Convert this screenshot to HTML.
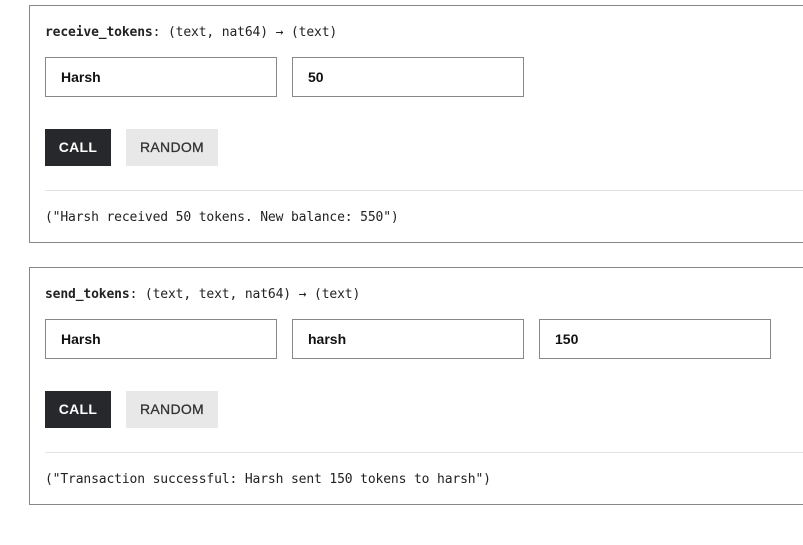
<!DOCTYPE html>
<html><head><style>
body{margin:0;background:#fff;width:803px;height:545px;overflow:hidden;position:relative;font-family:"Liberation Sans",sans-serif}
.card{position:absolute;left:29px;width:800px;border:1px solid #888;box-sizing:border-box;background:#fff}
.t{position:absolute;left:15px;font:13px "DejaVu Sans Mono",monospace;letter-spacing:-0.14px;color:#222;white-space:nowrap}
.t b{font-weight:bold}
.in{position:absolute;width:232px;height:40px;border:1px solid #888;box-sizing:border-box;font-size:14px;font-weight:bold;color:#111;line-height:38px;padding-left:15px}
.btn{position:absolute;height:37px;line-height:37px;text-align:center;font-size:14px;font-weight:bold;letter-spacing:.3px}
.call{background:#26282b;color:#fff;width:66px}
.rnd{background:#e8e8e8;color:#333;width:92px;font-weight:normal;-webkit-text-stroke:.3px #333}
.hr{position:absolute;left:15px;right:0;height:1px;background:#e2e2e2}
</style></head><body>
<div class="card" style="top:5px;height:238px">
<div class="t" style="top:19px"><b>receive_tokens</b>: (text, nat64) → (text)</div>
<div class="in" style="left:15px;top:51px">Harsh</div>
<div class="in" style="left:262px;top:51px">50</div>
<div class="btn call" style="left:15px;top:123px">CALL</div>
<div class="btn rnd" style="left:96px;top:123px">RANDOM</div>
<div class="hr" style="top:184px"></div>
<div class="t" style="top:204px">("Harsh received 50 tokens. New balance: 550")</div>
</div>
<div class="card" style="top:267px;height:238px">
<div class="t" style="top:19px"><b>send_tokens</b>: (text, text, nat64) → (text)</div>
<div class="in" style="left:15px;top:51px">Harsh</div>
<div class="in" style="left:262px;top:51px">harsh</div>
<div class="in" style="left:509px;top:51px">150</div>
<div class="btn call" style="left:15px;top:123px">CALL</div>
<div class="btn rnd" style="left:96px;top:123px">RANDOM</div>
<div class="hr" style="top:184px"></div>
<div class="t" style="top:204px">("Transaction successful: Harsh sent 150 tokens to harsh")</div>
</div>
</body></html>
